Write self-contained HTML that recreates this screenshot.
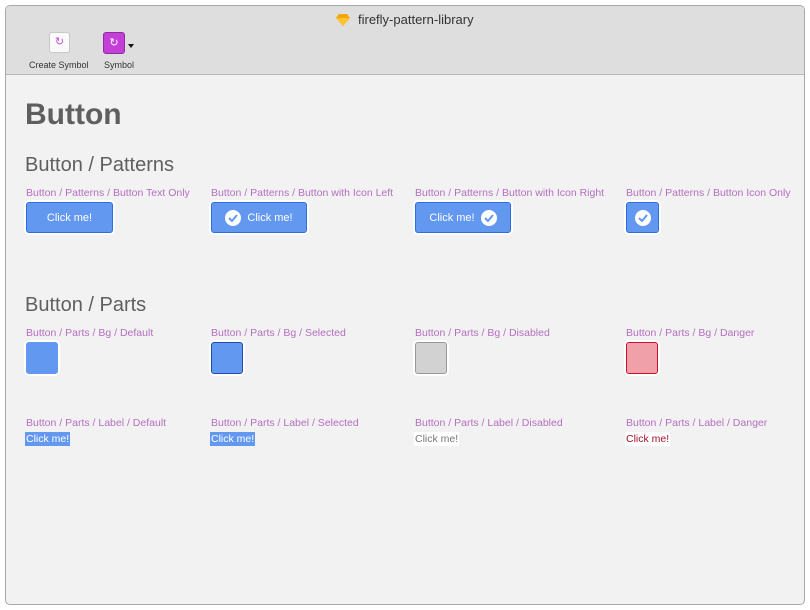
<!DOCTYPE html><html><head><style>
body{margin:0;width:810px;height:610px;background:#fff;font-family:"Liberation Sans",sans-serif;position:relative;overflow:hidden}
.win{position:absolute;left:5px;top:5px;width:798px;height:598px;border:1px solid #a8a8a8;border-radius:5px;background:#f2f2f2;overflow:hidden}
.bar{position:absolute;left:0;top:0;width:100%;height:68px;background:#dedede;border-bottom:1px solid #b8b8b8}
.a{position:absolute}
.lbl{position:absolute;font-size:10.5px;color:#b56fc0;white-space:nowrap}
.btn{position:absolute;top:196px;height:31px;background:#6398f0;border:1px solid #2f6de0;border-radius:3px;box-shadow:0 0 0 2px #fff;color:#fff;font-size:11px;display:flex;align-items:center;justify-content:center;gap:6px;box-sizing:border-box}
.chk{width:16px;height:16px;border-radius:50%;background:#fff;display:inline-flex;align-items:center;justify-content:center}
.sq{position:absolute;top:336px;width:32px;height:32px;box-sizing:border-box;border-radius:3px;box-shadow:0 0 0 2px #fff}
.tx{position:absolute;top:426px;font-size:10.5px;padding:0 1px;line-height:14px}
</style></head><body>
<div class="win">
<div class="bar">
<div class="a" style="left:330px;top:7px;width:14px;height:12px"><svg width="14" height="12" viewBox="0 0 14 12"><path d="M3 0h8l3 4-7 8-7-8z" fill="#f7a600"/><path d="M0 4h14L7 12z" fill="#fcc330"/></svg></div>
<div class="a" style="left:352px;top:6px;font-size:13px;color:#333">firefly-pattern-library</div>
<div class="a" style="left:43px;top:26px;width:19px;height:19px;background:#fafafa;border:1px solid #c8c8c8;border-radius:3px;color:#c050e0;font-size:11px;text-align:center;line-height:19px">↻</div>
<div class="a" style="left:97px;top:26px;width:20px;height:20px;background:#c43fd8;border:1px solid #8e2ca0;border-radius:3px;color:#fff;font-size:11px;text-align:center;line-height:20px">↻</div>
<div class="a" style="left:122px;top:38px;width:0;height:0;border-left:3px solid transparent;border-right:3px solid transparent;border-top:4px solid #111"></div>
<div class="a" style="left:23px;top:54px;font-size:9px;color:#333">Create Symbol</div>
<div class="a" style="left:98px;top:54px;font-size:9px;color:#333">Symbol</div>
</div>
<div class="a" style="left:19px;top:92px;font-size:30px;font-weight:bold;color:#5f5f5f">Button</div>
<div class="a" style="left:19px;top:148px;font-size:20px;color:#5f5f5f">Button / Patterns</div>
<div class="a" style="left:19px;top:288px;font-size:20px;color:#5f5f5f">Button / Parts</div>
<div class="lbl" style="left:20px;top:181px">Button / Patterns / Button Text Only</div>
<div class="lbl" style="left:205px;top:181px">Button / Patterns / Button with Icon Left</div>
<div class="lbl" style="left:409px;top:181px">Button / Patterns / Button with Icon Right</div>
<div class="lbl" style="left:620px;top:181px">Button / Patterns / Button Icon Only</div>
<div class="btn" style="left:20px;width:87px">Click me!</div>
<div class="btn" style="left:205px;width:96px"><span class="chk"><svg width="10" height="8"><path d="M1 4l3 3 5-6" stroke="#6398f0" stroke-width="2" fill="none"/></svg></span>Click me!</div>
<div class="btn" style="left:409px;width:96px">Click me!<span class="chk"><svg width="10" height="8"><path d="M1 4l3 3 5-6" stroke="#6398f0" stroke-width="2" fill="none"/></svg></span></div>
<div class="btn" style="left:620px;width:33px"><span class="chk"><svg width="10" height="8"><path d="M1 4l3 3 5-6" stroke="#6398f0" stroke-width="2" fill="none"/></svg></span></div>
<div class="lbl" style="left:20px;top:321px">Button / Parts / Bg / Default</div>
<div class="lbl" style="left:205px;top:321px">Button / Parts / Bg / Selected</div>
<div class="lbl" style="left:409px;top:321px">Button / Parts / Bg / Disabled</div>
<div class="lbl" style="left:620px;top:321px">Button / Parts / Bg / Danger</div>
<div class="sq" style="left:20px;background:#6398f0;border:1px solid #6398f0"></div>
<div class="sq" style="left:205px;background:#6398f0;border:1px solid #1f4faa"></div>
<div class="sq" style="left:409px;background:#d2d2d2;border:1px solid #999"></div>
<div class="sq" style="left:620px;background:#f0a0a8;border:1px solid #c8102e"></div>
<div class="lbl" style="left:20px;top:411px">Button / Parts / Label / Default</div>
<div class="lbl" style="left:205px;top:411px">Button / Parts / Label / Selected</div>
<div class="lbl" style="left:409px;top:411px">Button / Parts / Label / Disabled</div>
<div class="lbl" style="left:620px;top:411px">Button / Parts / Label / Danger</div>
<div class="tx" style="left:19px;background:#6398f0;color:#fff">Click me!</div>
<div class="tx" style="left:204px;background:#6398f0;color:#fff">Click me!</div>
<div class="tx" style="left:408px;background:#fff;color:#777">Click me!</div>
<div class="tx" style="left:619px;background:#fff;color:#a0102a">Click me!</div>
</div>
</body></html>
